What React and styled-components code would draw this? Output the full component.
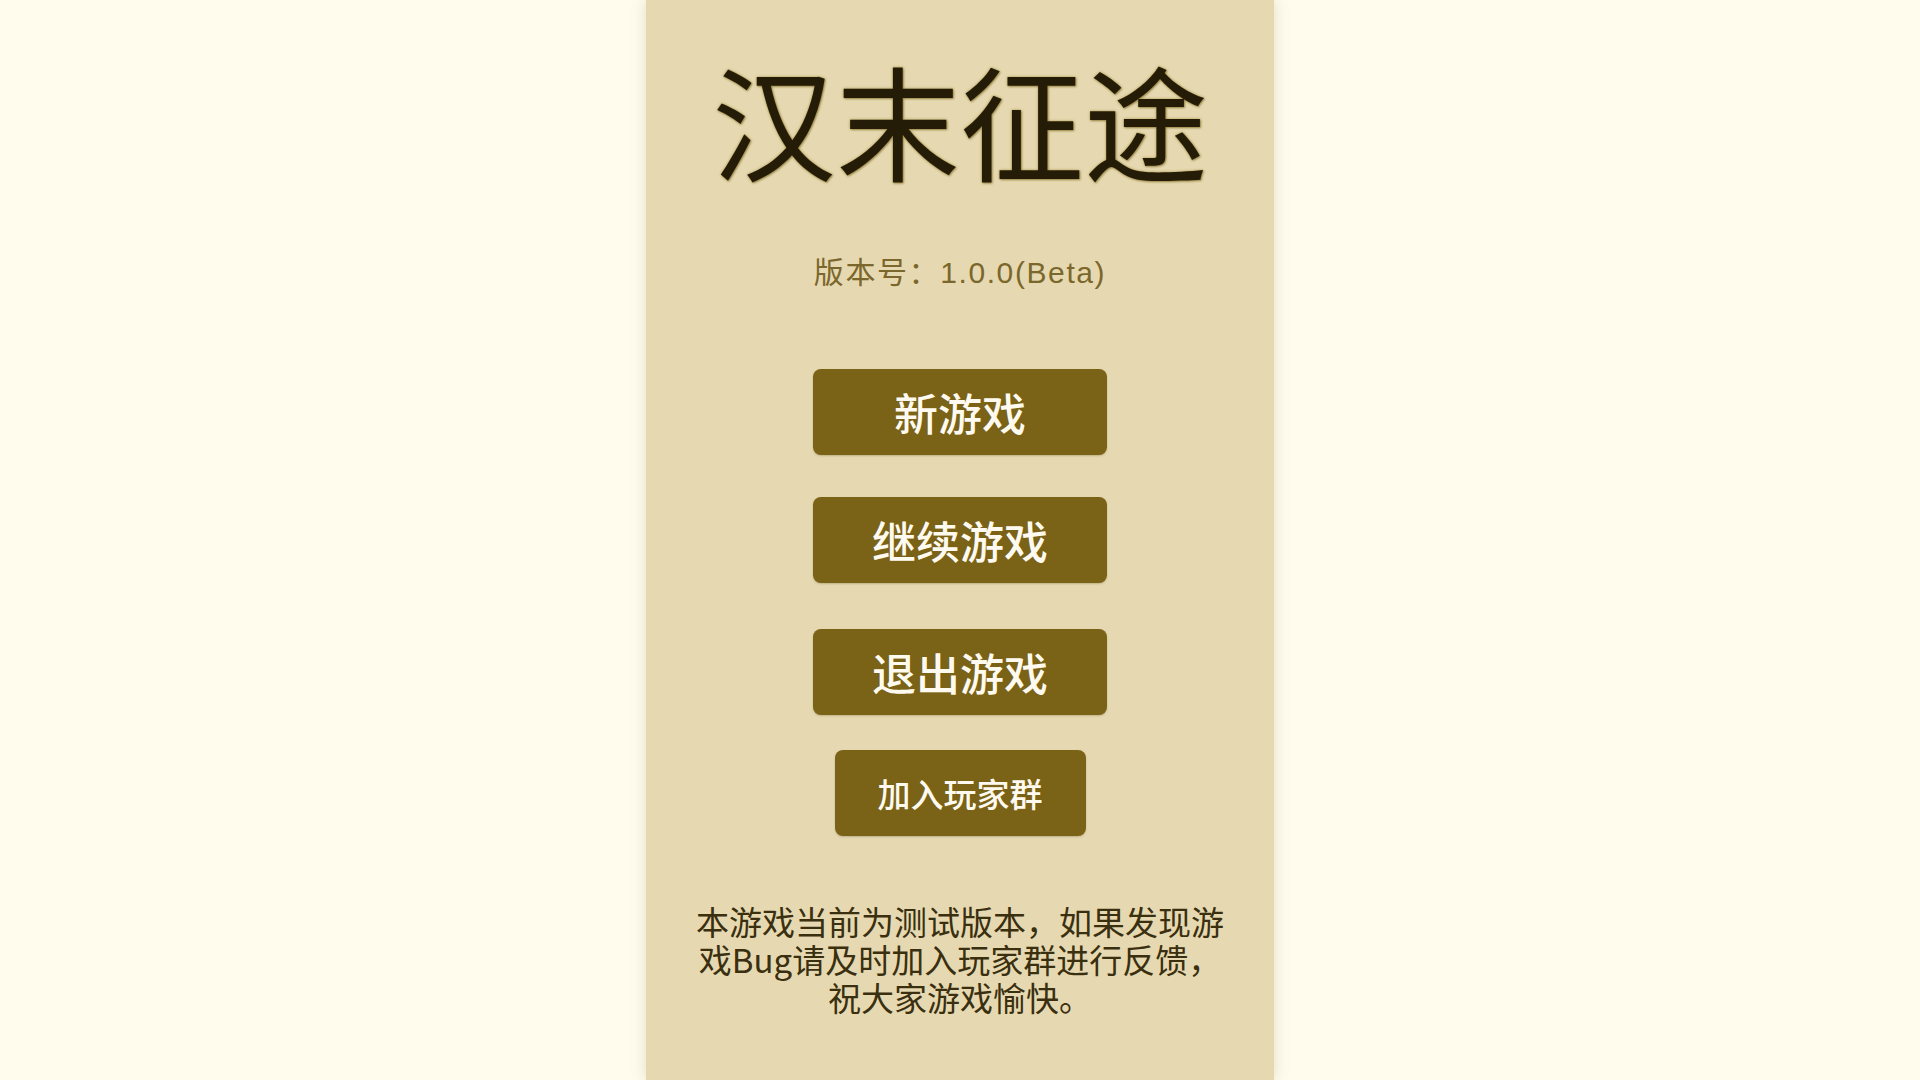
import React from "react";
import styled, { createGlobalStyle } from "styled-components";

const Global = createGlobalStyle`
  html, body {
    margin: 0;
    padding: 0;
    background: #fffcee;
    font-family: "Noto Sans CJK SC", "Noto Sans", sans-serif;
  }
  * { box-sizing: border-box; }
`;

const Page = styled.div`
  min-height: 100vh;
  display: flex;
  justify-content: center;
  background: #fffcee;
`;

const Panel = styled.main`
  width: 628px;
  min-height: 100vh;
  background: #e6d9b1;
  box-shadow: 0 0 14px rgba(150, 130, 70, 0.25);
  display: flex;
  flex-direction: column;
  align-items: center;
  padding-top: 56px;
`;

const Title = styled.h1`
  margin: 0;
  font-size: 124px;
  line-height: 1;
  font-weight: 400;
  color: #241c06;
  text-shadow: 0 0 3px rgba(150, 125, 30, 0.7), 1px 1px 2px rgba(90, 70, 10, 0.5);
  white-space: nowrap;
`;

const Version = styled.div`
  margin-top: 78px;
  font-family: "Liberation Sans", "Noto Sans CJK SC", sans-serif;
  font-size: 30px;
  letter-spacing: 1.6px;
  line-height: 1;
  color: #7b672c;
  white-space: nowrap;
`;

const Menu = styled.nav`
  margin-top: 81px;
  display: flex;
  flex-direction: column;
  align-items: center;
`;

const MenuButton = styled.button`
  width: ${(p) => p.$w}px;
  height: 86px;
  margin-top: ${(p) => p.$mt}px;
  border: none;
  border-radius: 8px;
  background: #7a6216;
  color: #fffaf0;
  font-family: "Noto Sans CJK SC", "Noto Sans", sans-serif;
  font-size: ${(p) => p.$fs}px;
  font-weight: 500;
  line-height: 1;
  display: flex;
  align-items: center;
  justify-content: center;
  box-shadow: 0 1px 2px rgba(80, 60, 10, 0.25);
  cursor: pointer;
  padding: 0;
`;

const Notice = styled.p`
  margin: 66px 0 0;
  width: 550px;
  font-size: 33px;
  line-height: 38px;
  color: #3a2f0f;
  text-align: center;
`;

const buttons = [
  { label: "新游戏", w: 294, mt: 0, fs: 44 },
  { label: "继续游戏", w: 294, mt: 42, fs: 44 },
  { label: "退出游戏", w: 294, mt: 46, fs: 44 },
  { label: "加入玩家群", w: 251, mt: 35, fs: 33 },
];

export default function App() {
  return (
    <>
      <Global />
      <Page>
        <Panel>
          <Title>汉末征途</Title>
          <Version>版本号：1.0.0(Beta)</Version>
          <Menu>
            {buttons.map((b) => (
              <MenuButton key={b.label} $w={b.w} $mt={b.mt} $fs={b.fs}>
                {b.label}
              </MenuButton>
            ))}
          </Menu>
          <Notice>
            本游戏当前为测试版本，如果发现游戏Bug请及时加入玩家群进行反馈，祝大家游戏愉快。
          </Notice>
        </Panel>
      </Page>
    </>
  );
}
